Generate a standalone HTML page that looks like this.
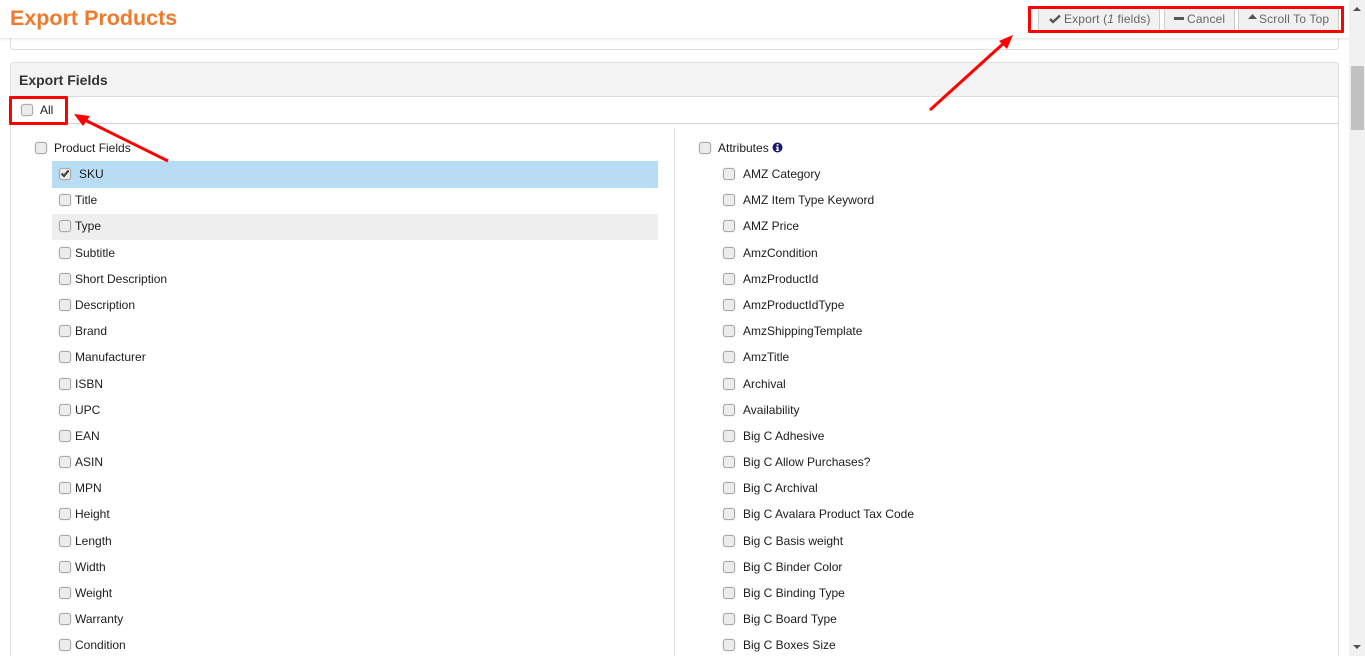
<!DOCTYPE html>
<html>
<head>
<meta charset="utf-8">
<style>
html,body{margin:0;padding:0;width:1365px;height:656px;overflow:hidden;background:#fff;font-family:"Liberation Sans",sans-serif;font-size:12px;color:#1c1c1c}
div,span{position:absolute;box-sizing:border-box}
#p{left:0;top:0;width:1365px;height:656px;overflow:hidden}
.c{width:12px;height:12px;background:#ececec;border:1px solid #aaa;border-radius:3px;box-shadow:0 0 1px #aaa}
.t{white-space:nowrap;line-height:14px;height:14px}
.btn{top:8px;height:22px;background:#f1f1f1;border-left:1px solid #ccc;border-right:1px solid #ccc;line-height:22px;font-size:12px;color:#666;white-space:nowrap}
</style>
</head>
<body>
<div id="p">
<!-- panels -->
<div style="left:10px;top:20px;width:1329px;height:30px;border:1px solid #ddd;border-radius:4px;background:#fff"></div>
<div style="left:10px;top:62px;width:1329px;height:594px;border:1px solid #ddd;border-bottom:0;border-radius:4px 4px 0 0;background:#fff"></div>
<div style="left:11px;top:63px;width:1327px;height:34px;background:#f3f3f3;border-bottom:1px solid #ddd;border-radius:4px 4px 0 0"></div>
<div class="t" style="left:19px;top:73px;font-size:14px;font-weight:bold;color:#333">Export Fields</div>
<div style="left:11px;top:123px;width:1327px;height:1px;background:#d4d4d4"></div>
<div style="left:674px;top:128px;width:1px;height:528px;background:#ddd"></div>

<!-- header -->
<div style="left:0;top:0;width:1349px;height:38px;background:#fff;box-shadow:0 1px 3px rgba(0,0,0,.12)"></div>
<div class="t" style="left:10px;top:5px;height:27px;line-height:27px;font-size:21.5px;font-weight:bold;color:#f07a2b">Export Products</div>
<div class="btn" style="left:1038px;width:122px"><svg width="12" height="10" viewBox="0 0 12 10" style="position:absolute;left:10px;top:6px"><path d="M1 5l3 3L11 1.500" fill="none" stroke="#555" stroke-width="2.400"/></svg><span style="left:25px;top:0;letter-spacing:.15px">Export (<i>1</i> fields)</span></div>
<div class="btn" style="left:1164px;width:71px"><span style="left:9px;top:9px;width:10px;height:3px;background:#555"></span><span style="left:22px;top:0;letter-spacing:.15px">Cancel</span></div>
<div class="btn" style="left:1238px;width:101px"><svg width="9" height="5" viewBox="0 0 9 5" style="position:absolute;left:9px;top:6px"><path d="M0 5L4.500 0 9 5z" fill="#555"/></svg><span style="left:20px;top:0;letter-spacing:.15px">Scroll To Top</span></div>

<!-- checkboxes: All + group heads -->
<div class="c" style="left:21px;top:104px"></div><div class="t" style="left:40px;top:103px">All</div>
<div class="c" style="left:35px;top:142px"></div><div class="t" style="left:54px;top:141px">Product Fields</div>
<div class="c" style="left:699px;top:142px"></div><div class="t" style="left:718px;top:141px">Attributes</div>
<svg width="11" height="11" viewBox="0 0 11 11" style="position:absolute;left:772px;top:142px"><circle cx="5.500" cy="5.500" r="5" fill="#16166e"/><rect x="4.700" y="2" width="1.800" height="1.600" fill="#fff"/><path d="M3.900 4.600h2.600v3.300h.8v1H3.900v-1h.8V5.600h-.8z" fill="#fff"/></svg>

<!-- highlights -->
<div style="left:52px;top:161px;width:606px;height:27px;background:#b9dcf5"></div>
<div style="left:52px;top:214px;width:606px;height:26px;background:#eee"></div>

<!-- left column -->
<div class="c" style="left:59px;top:168px"></div>
<svg width="10" height="9" viewBox="0 0 10 9" style="position:absolute;left:60px;top:169px"><path d="M1.500 4.500l2.500 2.500L8.500 1.500" fill="none" stroke="#444" stroke-width="2.200"/></svg>
<div class="t" style="left:79px;top:167px">SKU</div>
<div class="c" style="left:59px;top:194px"></div><div class="t" style="left:75px;top:193px">Title</div>
<div class="c" style="left:59px;top:220px"></div><div class="t" style="left:75px;top:219px">Type</div>
<div class="c" style="left:59px;top:247px"></div><div class="t" style="left:75px;top:246px">Subtitle</div>
<div class="c" style="left:59px;top:273px"></div><div class="t" style="left:75px;top:272px">Short Description</div>
<div class="c" style="left:59px;top:299px"></div><div class="t" style="left:75px;top:298px">Description</div>
<div class="c" style="left:59px;top:325px"></div><div class="t" style="left:75px;top:324px">Brand</div>
<div class="c" style="left:59px;top:351px"></div><div class="t" style="left:75px;top:350px">Manufacturer</div>
<div class="c" style="left:59px;top:378px"></div><div class="t" style="left:75px;top:377px">ISBN</div>
<div class="c" style="left:59px;top:404px"></div><div class="t" style="left:75px;top:403px">UPC</div>
<div class="c" style="left:59px;top:430px"></div><div class="t" style="left:75px;top:429px">EAN</div>
<div class="c" style="left:59px;top:456px"></div><div class="t" style="left:75px;top:455px">ASIN</div>
<div class="c" style="left:59px;top:482px"></div><div class="t" style="left:75px;top:481px">MPN</div>
<div class="c" style="left:59px;top:508px"></div><div class="t" style="left:75px;top:507px">Height</div>
<div class="c" style="left:59px;top:535px"></div><div class="t" style="left:75px;top:534px">Length</div>
<div class="c" style="left:59px;top:561px"></div><div class="t" style="left:75px;top:560px">Width</div>
<div class="c" style="left:59px;top:587px"></div><div class="t" style="left:75px;top:586px">Weight</div>
<div class="c" style="left:59px;top:613px"></div><div class="t" style="left:75px;top:612px">Warranty</div>
<div class="c" style="left:59px;top:639px"></div><div class="t" style="left:75px;top:638px">Condition</div>

<!-- right column -->
<div class="c" style="left:723px;top:168px"></div><div class="t" style="left:743px;top:167px">AMZ Category</div>
<div class="c" style="left:723px;top:194px"></div><div class="t" style="left:743px;top:193px">AMZ Item Type Keyword</div>
<div class="c" style="left:723px;top:220px"></div><div class="t" style="left:743px;top:219px">AMZ Price</div>
<div class="c" style="left:723px;top:247px"></div><div class="t" style="left:743px;top:246px">AmzCondition</div>
<div class="c" style="left:723px;top:273px"></div><div class="t" style="left:743px;top:272px">AmzProductId</div>
<div class="c" style="left:723px;top:299px"></div><div class="t" style="left:743px;top:298px">AmzProductIdType</div>
<div class="c" style="left:723px;top:325px"></div><div class="t" style="left:743px;top:324px">AmzShippingTemplate</div>
<div class="c" style="left:723px;top:351px"></div><div class="t" style="left:743px;top:350px">AmzTitle</div>
<div class="c" style="left:723px;top:378px"></div><div class="t" style="left:743px;top:377px">Archival</div>
<div class="c" style="left:723px;top:404px"></div><div class="t" style="left:743px;top:403px">Availability</div>
<div class="c" style="left:723px;top:430px"></div><div class="t" style="left:743px;top:429px">Big C Adhesive</div>
<div class="c" style="left:723px;top:456px"></div><div class="t" style="left:743px;top:455px">Big C Allow Purchases?</div>
<div class="c" style="left:723px;top:482px"></div><div class="t" style="left:743px;top:481px">Big C Archival</div>
<div class="c" style="left:723px;top:508px"></div><div class="t" style="left:743px;top:507px">Big C Avalara Product Tax Code</div>
<div class="c" style="left:723px;top:535px"></div><div class="t" style="left:743px;top:534px">Big C Basis weight</div>
<div class="c" style="left:723px;top:561px"></div><div class="t" style="left:743px;top:560px">Big C Binder Color</div>
<div class="c" style="left:723px;top:587px"></div><div class="t" style="left:743px;top:586px">Big C Binding Type</div>
<div class="c" style="left:723px;top:613px"></div><div class="t" style="left:743px;top:612px">Big C Board Type</div>
<div class="c" style="left:723px;top:639px"></div><div class="t" style="left:743px;top:638px">Big C Boxes Size</div>

<!-- scrollbar -->
<div style="left:1349px;top:0;width:16px;height:656px;background:#f1f1f1"></div>
<div style="left:1351px;top:66px;width:13px;height:64px;background:#c1c1c1"></div>
<svg width="16" height="656" viewBox="0 0 16 656" style="position:absolute;left:1349px;top:0"><path d="M4 11L8 7l4 4z" fill="#505050"/><path d="M4 645l4 4 4-4z" fill="#505050"/></svg>

<!-- annotations -->
<div style="left:1028px;top:6px;width:316px;height:27px;border:3px solid #f00;border-radius:1px"></div>
<div style="left:9px;top:96px;width:59px;height:29px;border:3px solid #f00;border-radius:1px"></div>
<svg width="1365" height="656" viewBox="0 0 1365 656" style="position:absolute;left:0;top:0">
<path d="M168 161L85 120" stroke="#f00" stroke-width="3" fill="none"/>
<path d="M74 114L90 116 83 126z" fill="#f00"/>
<path d="M930 110L1005 42" stroke="#f00" stroke-width="3" fill="none"/>
<path d="M1013 35L1007 49 999 41z" fill="#f00"/>
</svg>
</div>
</body>
</html>
